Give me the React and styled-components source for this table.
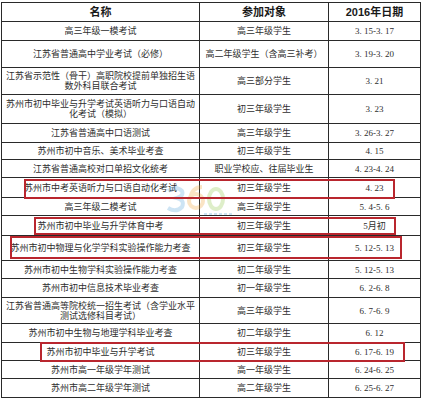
import React from 'react';
import styled, { createGlobalStyle } from 'styled-components';

const GlobalStyle = createGlobalStyle`
  html, body {
    margin: 0;
    padding: 0;
    background: #fff;
  }
  body {
    font-family: "Liberation Serif", "Noto Sans CJK SC", serif;
  }
`;

const Page = styled.div`
  width: 423px;
  height: 400px;
  padding: 2px 0 0 1px;
  box-sizing: border-box;
  background: #fff;
`;

const Table = styled.div`
  position: relative;
  width: 420px;
  border-top: 1px solid #2a2a2a;
  border-left: 1px solid #2a2a2a;
  box-sizing: border-box;
`;

const Row = styled.div`
  display: grid;
  grid-template-columns: 198px 129px 92px;
  height: ${p => p.$h}px;
`;

const Cell = styled.div`
  display: flex;
  flex-direction: column;
  align-items: center;
  justify-content: center;
  border-right: 1px solid #2a2a2a;
  border-bottom: 1px solid #2a2a2a;
  box-sizing: border-box;
  color: ${p => (p.$head ? '#1a1a1a' : '#2e2e2e')};
  font-family: ${p =>
    p.$head
      ? '"Liberation Sans", "Noto Sans CJK SC", sans-serif'
      : '"Liberation Serif", "Noto Sans CJK SC", serif'};
  font-size: ${p => (p.$head ? '11px' : '9px')};
  font-weight: ${p => (p.$head ? 700 : 400)};
  line-height: 10px;
  white-space: nowrap;
  text-align: center;
`;

const Line = styled.span`
  display: block;
`;

const RedBox = styled.div`
  position: absolute;
  left: ${p => p.$x}px;
  top: ${p => p.$y}px;
  width: ${p => p.$w}px;
  height: ${p => p.$h}px;
  border: 2px solid #b9262e;
  box-sizing: border-box;
  pointer-events: none;
`;

const Watermark = styled.svg`
  position: absolute;
  left: 162px;
  top: 180px;
  opacity: 0.28;
  pointer-events: none;
`;

const rows = [
  { name: ['高三年级一模考试'], who: '高三年级学生', date: '3. 15-3. 17', h: 19 },
  { name: ['江苏省普通高中学业考试（必修）'], who: '高二年级学生（含高三补考）', date: '3. 19-3. 20', h: 27 },
  { name: ['江苏省示范性（骨干）高职院校提前单独招生语', '数外科目联合考试'], who: '高三部分学生', date: '3. 21', h: 27 },
  { name: ['苏州市初中毕业与升学考试英语听力与口语自动', '化考试（模拟）'], who: '初三年级学生', date: '3. 23', h: 29 },
  { name: ['江苏省普通高中口语测试'], who: '高三年级学生', date: '3. 26-3. 27', h: 19 },
  { name: ['苏州市初中音乐、美术毕业考查'], who: '初三年级学生', date: '4. 15', h: 17 },
  { name: ['江苏省普通高校对口单招文化统考'], who: '职业学校应、往届毕业生', date: '4. 23-4. 24', h: 18 },
  { name: ['苏州市中考英语听力与口语自动化考试'], who: '初三年级学生', date: '4. 23', h: 20 },
  { name: ['高三年级二模考试'], who: '高三年级学生', date: '5. 4-5.  6', h: 18 },
  { name: ['苏州市初中毕业与升学体育中考'], who: '初三年级学生', date: '5月初', h: 20 },
  { name: ['苏州市初中物理与化学学科实验操作能力考查'], who: '初三年级学生', date: '5. 12-5. 13', h: 25 },
  { name: ['苏州市初中生物学科实验操作能力考查'], who: '初二年级学生', date: '5. 12-5. 13', h: 18 },
  { name: ['苏州市初中信息技术毕业考查'], who: '初一年级学生', date: '6. 2-6. 8', h: 19 },
  { name: ['江苏省普通高等院校统一招生考试（含学业水平', '测试选修科目考试）'], who: '高三年级学生', date: '6. 7-6. 9', h: 26 },
  { name: ['苏州市初中生物与地理学科毕业考查'], who: '初二年级学生', date: '6. 12', h: 19 },
  { name: ['苏州市初中毕业与升学考试'], who: '初三年级学生', date: '6. 17-6. 19', h: 18 },
  { name: ['苏州市高一年级学年测试'], who: '高一年级学生', date: '6. 24-6. 25', h: 18 },
  { name: ['苏州市高二年级学年测试'], who: '高二年级学生', date: '6. 25-6. 27', h: 19 },
];

const boxes = [
  { x: 22, y: 176, w: 371, h: 20 },
  { x: 32, y: 214, w: 362, h: 18 },
  { x: 8, y: 233, w: 392, h: 23 },
  { x: 38, y: 339, w: 365, h: 20 },
];

// faint "360" watermark drawn as rings, as it appears in the scan
const Logo = () => (
  <Watermark width="72" height="34" viewBox="0 0 72 34">
    <path d="M4 8 Q12 2 18 8 Q20 13 13 15 Q21 17 18 24 Q12 30 4 25" fill="none" stroke="#4f9fd8" strokeWidth="4" />
    <circle cx="32" cy="18" r="7" fill="none" stroke="#f0a030" strokeWidth="4" />
    <path d="M26 16 Q28 4 38 4" fill="none" stroke="#f0a030" strokeWidth="4" />
    <ellipse cx="52" cy="16" rx="7" ry="10" fill="none" stroke="#8cc63f" strokeWidth="4" />
    <path d="M40 31 L70 31" stroke="#4f9fd8" strokeWidth="2" strokeDasharray="3 2" />
  </Watermark>
);

const App = () => (
  <Page>
    <GlobalStyle />
    <Table>
      <Row $h={19}>
        <Cell $head>名称</Cell>
        <Cell $head>参加对象</Cell>
        <Cell $head>2016年日期</Cell>
      </Row>
      {rows.map((r, i) => (
        <Row key={i} $h={r.h}>
          <Cell>
            {r.name.map((l, j) => (
              <Line key={j}>{l}</Line>
            ))}
          </Cell>
          <Cell>{r.who}</Cell>
          <Cell>{r.date}</Cell>
        </Row>
      ))}
      <Logo />
      {boxes.map((b, i) => (
        <RedBox key={i} $x={b.x} $y={b.y} $w={b.w} $h={b.h} />
      ))}
    </Table>
  </Page>
);

export default App;
